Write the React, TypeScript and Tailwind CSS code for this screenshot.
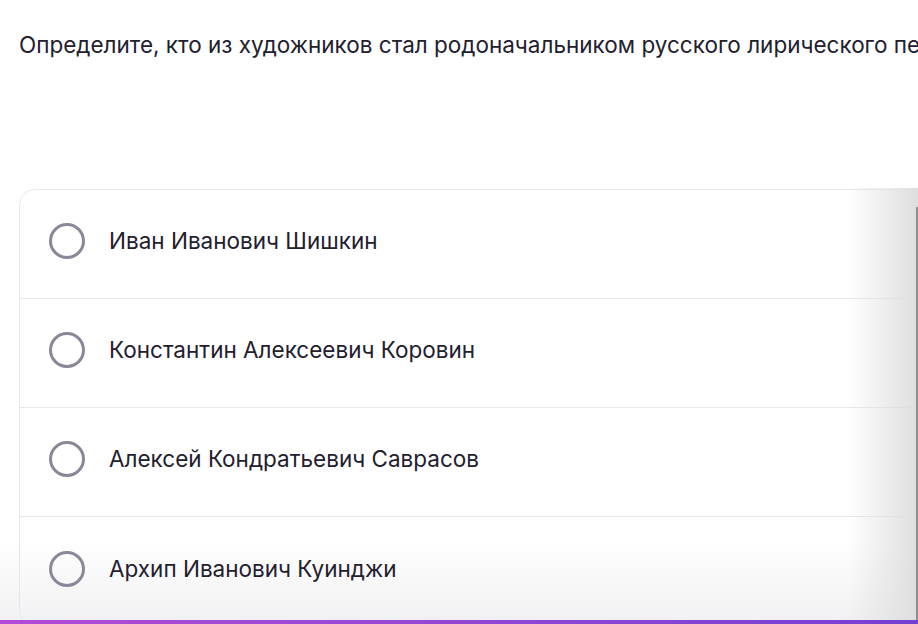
const options = [
  "Иван Иванович Шишкин",
  "Константин Алексеевич Коровин",
  "Алексей Кондратьевич Саврасов",
  "Архип Иванович Куинджи",
];

export default function App() {
  return (
    <div
      className="relative h-[624px] w-[918px] overflow-hidden bg-white text-[#22202e]"
      style={{ fontFamily: "Inter, 'Noto Sans', sans-serif" }}
    >
      {/* bottom fade behind the content */}
      <div className="pointer-events-none absolute bottom-[4px] left-0 right-0 h-[80px] bg-gradient-to-b from-transparent to-[#f1f1f3]" />

      <div className="relative pl-[19px] pt-[30px]">
        {/* Question */}
        <h1 className="whitespace-nowrap text-[22.5px] font-normal leading-[30px]">
          Определите, кто из художников стал родоначальником русского лирического пейзажа?
        </h1>

        {/* Answers */}
        <div className="mt-[129px] w-[960px] rounded-[16px] border border-[#e8e6ee]">
          {options.map((o, i) => (
            <div
              key={o}
              className={
                "flex h-[109px] items-center gap-[24px] pb-[6px] pl-[29px] " +
                (i < options.length - 1 ? "border-b border-[#e8e6ee]" : "")
              }
            >
              <span className="h-[36px] w-[36px] rounded-full border-[3px] border-[#8a8798]" />
              <span className="text-[22.5px] font-normal">{o}</span>
            </div>
          ))}
        </div>
      </div>

      {/* right edge shadow */}
      <div className="pointer-events-none absolute bottom-[4px] right-0 top-[188px] w-[70px] bg-gradient-to-r from-transparent to-[#dedede]" />
      <div className="pointer-events-none absolute bottom-[4px] right-0 top-[207px] w-[2px] bg-[#8d8d8d]" />
      <div className="absolute bottom-0 left-0 right-0 h-[4px] bg-gradient-to-r from-[#b24bd7] to-[#7440d2]" />
    </div>
  );
}
